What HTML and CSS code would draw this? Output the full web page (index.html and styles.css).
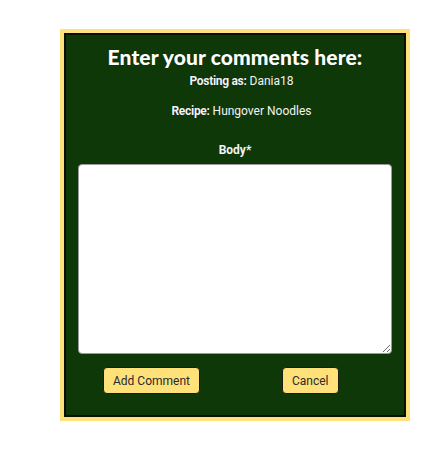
FILE: index.html
```html
<!DOCTYPE html>
<html>
<head>
<meta charset="utf-8">
<link rel="stylesheet" href="styles.css">
</head>
<body>
<div class="page">
  <div class="frame">
    <form class="card">
      <h2 class="title">Enter your comments here:</h2>
      <p class="meta"><b>Posting as:</b> Dania18</p>
      <p class="meta recipe"><b>Recipe:</b> Hungover Noodles</p>
      <label class="label">Body*</label>
      <textarea class="body"></textarea>
      <div class="actions">
        <button type="button" class="btn">Add Comment</button>
        <button type="button" class="btn">Cancel</button>
      </div>
    </form>
  </div>
</div>
</body>
</html>
```
FILE: styles.css
```css
html, body {
  margin: 0;
  padding: 0;
  background: #fff;
}
.page {
  padding: 29px 0 0 60px;
}
.frame {
  width: 342px;
  border: 4px solid #ffe17a;
}
.card {
  border: 2px solid #0a0f05;
  background: #0f3809;
  height: 384px;
  box-sizing: border-box;
  display: flex;
  flex-direction: column;
  align-items: center;
  font-family: Roboto, "Liberation Sans", sans-serif;
  color: #f4f4f4;
  padding: 10px 11px 0 11px;
}
.title {
  margin: 0;
  font-family: "Comic Sans MS", Lato, sans-serif;
  font-weight: 900;
  font-size: 21px;
  line-height: 24px;
  letter-spacing: 0.1px;
  color: #fff;
  text-shadow: 0 0 1px #0a2a06;
}
.meta {
  margin: 4px 0 0 0;
  padding-left: 13px;
  font-size: 12px;
  line-height: 16px;
}
.recipe {
  margin-top: 14px;
}
.meta b {
  font-weight: 700;
  letter-spacing: -0.3px;
  text-shadow: 0 0 1px #000;
}
.label {
  margin-top: 23px;
  font-size: 12px;
  font-weight: 700;
  line-height: 16px;
}
.body {
  margin-top: 6px;
  width: 314px;
  height: 190px;
  box-sizing: border-box;
  border: 1px solid #9a9a9a;
  border-radius: 4px;
  background: #fff;
  resize: vertical;
}
.actions {
  align-self: stretch;
  display: flex;
  gap: 82px;
  padding-left: 26px;
  margin-top: 13px;
}
.btn {
  height: 27px;
  padding: 0 9px;
  background: #ffe17a;
  border: 1px solid #1a1a10;
  border-radius: 4px;
  font-family: Roboto, "Liberation Sans", sans-serif;
  font-size: 12px;
  color: #2a2a2a;
}
```
